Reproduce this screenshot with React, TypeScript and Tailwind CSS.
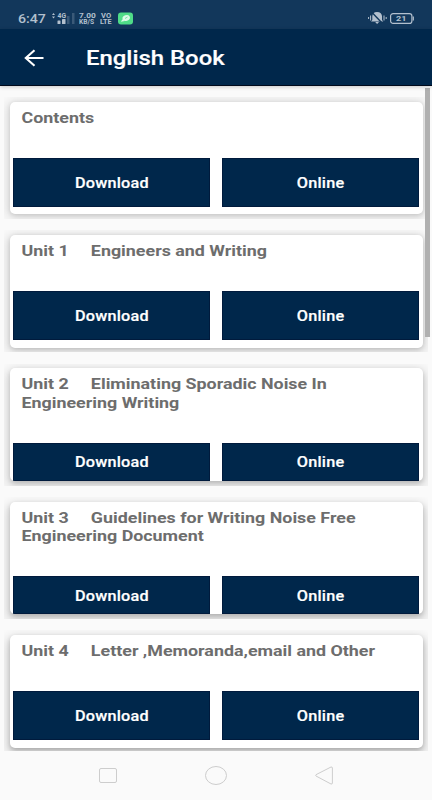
import React from "react";

type Unit = { lines: string[]; shadow: string };

const units: Unit[] = [
  { lines: ["Contents"], shadow: "shadow-[0_1px_4px_rgba(0,0,0,0.12),0_2px_12px_3px_rgba(0,0,0,0.13)]" },
  {
    lines: ["Unit 1     Engineers and Writing"],
    shadow: "shadow-[0_1px_4px_rgba(0,0,0,0.14),0_3px_12px_3px_rgba(0,0,0,0.14)]",
  },
  {
    lines: ["Unit 2     Eliminating Sporadic Noise In", "Engineering Writing"],
    shadow: "shadow-[0_2px_4px_rgba(0,0,0,0.15),0_4px_12px_3px_rgba(0,0,0,0.15)]",
  },
  {
    lines: ["Unit 3     Guidelines for Writing Noise Free", "Engineering Document"],
    shadow: "shadow-[0_2px_4px_rgba(0,0,0,0.17),0_5px_12px_3px_rgba(0,0,0,0.16)]",
  },
  {
    lines: ["Unit 4     Letter ,Memoranda,email and Other"],
    shadow: "shadow-[0_2px_4px_rgba(0,0,0,0.19),0_5px_12px_3px_rgba(0,0,0,0.17)]",
  },
];

function ActionButton({ label }: { label: string }) {
  return (
    <button className="flex flex-1 items-center justify-center border border-[#001a3c] bg-[#00274b] pt-[2px] text-[14px] font-medium text-white">
      <span className="scale-x-[1.16] tracking-[0.2px] [-webkit-text-stroke:0.2px_white]">{label}</span>
    </button>
  );
}

function UnitCard({ unit }: { unit: Unit }) {
  return (
    <div className="mb-[11.33px] h-[122px] shrink-0 overflow-hidden pt-[4.7px] pr-[5.5px] pl-[5.5px]">
      <section className={`h-[112.7px] rounded-[5px] bg-white ${unit.shadow}`}>
        <div className="flex h-full flex-col overflow-hidden rounded-[5px] pt-[7px] pr-[4px] pl-[3.8px]">
          <h2 className="mb-[31px] shrink-0 origin-left scale-x-[1.16] pl-[7.3px] text-[15.4px] leading-[18.3px] font-bold whitespace-pre text-[#6d6d6d]">
            {unit.lines.map((line) => (
              <span key={line} className="block">
                {line}
              </span>
            ))}
          </h2>
          <div className="flex h-[49px] min-h-0 gap-[12px]">
            <ActionButton label="Download" />
            <ActionButton label="Online" />
          </div>
        </div>
      </section>
    </div>
  );
}

function StatusBar() {
  return (
    <div className="flex h-[29px] items-start bg-[#12375b] pt-[10px] pr-[17px] pl-[18px] text-[#b3c0ce]">
      <span className="w-[33px] text-[13px] leading-[17px] font-medium">
        <span className="inline-block origin-left scale-x-[1.09]">6:47</span>
      </span>
      <svg width="25" height="16" viewBox="0 0 25 16" className="mt-[1px]" fill="currentColor">
        <path d="M1 4l1.5-2L4 4zM1 5.4h3L2.500 7.400z" />
        <text x="6.500" y="6.700" textLength="8.500" lengthAdjust="spacingAndGlyphs" fontFamily="Roboto, sans-serif" fontSize="6.500" fontWeight="700">4G</text>
        <rect x="6.500" y="9.500" width="3" height="3.500" rx="0.500" />
        <rect x="11" y="8" width="3.500" height="5" rx="0.500" />
        <rect x="16" y="5" width="2.500" height="8" opacity="0.25" />
        <rect x="21" y="2" width="2.500" height="11" opacity="0.25" />
      </svg>
      <span className="mt-[2.5px] ml-[3px] w-[21px] text-[6.3px] leading-[6.3px] font-bold">
        <span className="block origin-left scale-x-[1.32] whitespace-nowrap">7.00</span>
        <span className="block origin-left scale-x-[1.05] whitespace-nowrap">KB/S</span>
      </span>
      <span className="mt-[2.5px] w-[18px] text-[6.3px] leading-[6.3px] font-bold">
        <span className="block origin-left translate-x-[1px] scale-x-[1.2]">VO</span>
        <span className="block origin-left scale-x-[1.15]">LTE</span>
      </span>
      <svg width="15" height="13" viewBox="0 0 15 13" className="mt-[1.500px]">
        <rect x="0" y="0.500" width="15" height="12" rx="3" fill="#4fdc88" />
        <ellipse cx="8.200" cy="6" rx="3.800" ry="2.800" fill="#dcfbe8" transform="rotate(-20 8.200 6)" />
        <path d="M2.800 9.800l1.700-2.600 2.300 1.800z" fill="#dcfbe8" />
        <path d="M7 6.500l2.500-1.500" stroke="#6be09a" strokeWidth="0.900" />
      </svg>
      <svg width="19" height="14" viewBox="0 0 19 14" className="mt-[1px] ml-auto">
        <path d="M9 1c3.300 0 5 2 5 4.300V9l1.300 1.500H3L4.300 9V5.300C4.300 3 6 1 9 1z" fill="currentColor" />
        <path d="M7.200 11h3.800L9.100 13z" fill="currentColor" />
        <path d="M4.500 2l10 10.500" stroke="#12375b" strokeWidth="1.400" />
        <path d="M2.600 4.500v5M0.600 6v2M16 4.500v5M18.200 6v2" stroke="currentColor" strokeWidth="1" />
      </svg>
      <svg width="26" height="13" viewBox="0 0 26 13" className="mt-[2px] ml-[2px]">
        <rect x="1.600" y="1.600" width="21.300" height="9.800" rx="2.500" fill="none" stroke="currentColor" strokeWidth="1.200" />
        <path d="M24.300 4.500v4" stroke="currentColor" strokeWidth="1.200" />
        <text x="7" y="9.400" textLength="10.500" lengthAdjust="spacingAndGlyphs" fontFamily="Roboto, sans-serif" fontSize="8" fontWeight="700" fill="currentColor">21</text>
      </svg>
    </div>
  );
}

export default function App() {
  return (
    <div className="flex h-[800px] w-[432px] flex-col overflow-hidden bg-[#fafafa] font-['Roboto',sans-serif]">
      <StatusBar />
      <header className="relative z-10 flex h-[57px] shrink-0 items-center border-b border-[#000a1c] bg-[#00274b] pt-[1px] text-white shadow-[0_1px_4px_rgba(0,0,0,0.2)]">
        <svg width="20" height="18" viewBox="0 0 20 18" className="ml-[24px]" fill="none" stroke="currentColor" strokeWidth="2.100">
          <path d="M19.500 9H2M10.500 1.300L1.800 9l8.700 7.700" />
        </svg>
        <h1 className="mt-[1px] ml-[42.3px] origin-left scale-x-[1.165] text-[20.5px] leading-[24px] font-medium whitespace-nowrap [-webkit-text-stroke:0.2px_white]">
          English Book
        </h1>
      </header>
      <main className="relative h-[665px] shrink-0 overflow-hidden px-[4px] pt-[11px]">
        {units.map((unit) => (
          <UnitCard key={unit.lines[0]} unit={unit} />
        ))}
        <div className="absolute top-[2px] right-[2px] h-[249px] w-[5px] bg-[#b0b0b0]" />
      </main>
      <nav className="flex h-[49px] shrink-0 items-center justify-between bg-[#fafafa] px-[98px] text-[#cdcdcd]">
        <svg width="20" height="20" viewBox="0 0 20 20" fill="none" stroke="currentColor">
          <rect x="1.500" y="2.500" width="17" height="14" rx="1.500" />
        </svg>
        <svg width="24" height="20" viewBox="0 0 24 20" fill="none" stroke="currentColor">
          <ellipse cx="12" cy="9.500" rx="10.500" ry="9" />
        </svg>
        <svg width="20" height="20" viewBox="0 0 20 20" fill="none" stroke="currentColor" strokeLinejoin="round">
          <path d="M17 1L2 8.700Q1.200 9.300 2 10L17 18Q18.400 18.300 18.400 17V2Q18.400 0.800 17 1z" />
        </svg>
      </nav>
    </div>
  );
}
